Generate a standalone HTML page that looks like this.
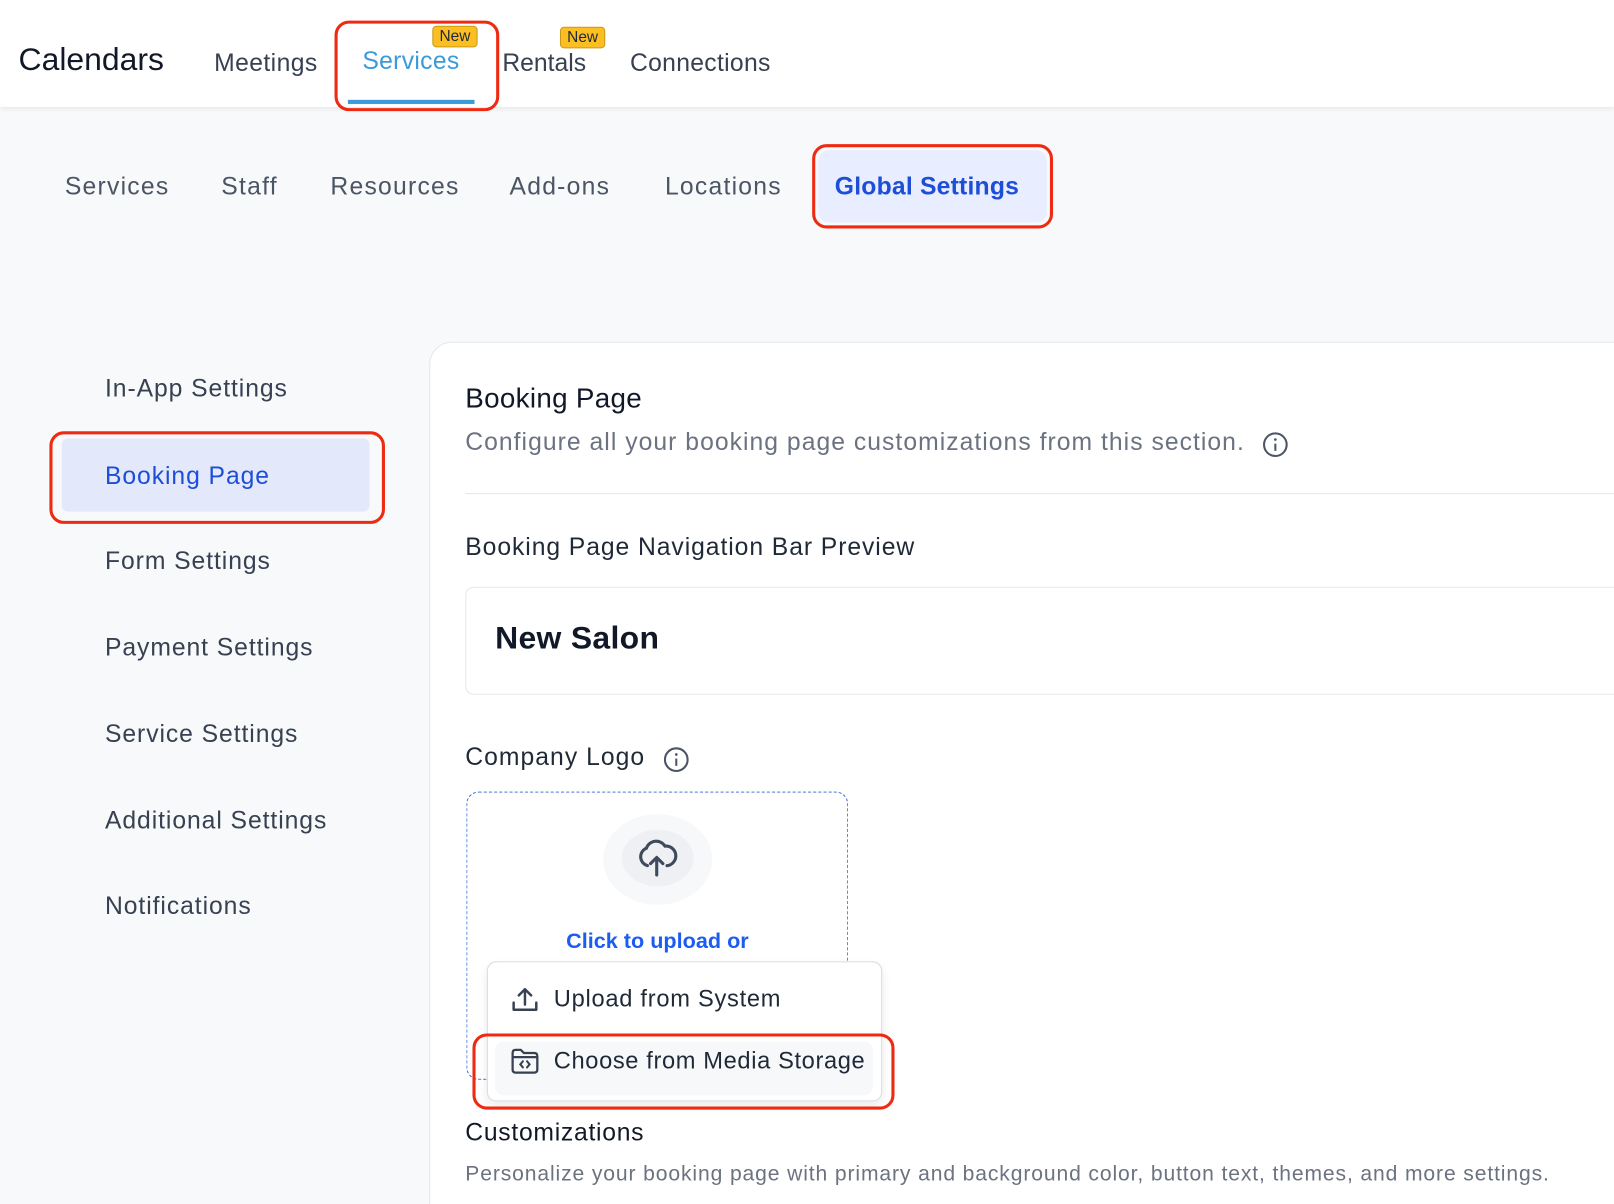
<!DOCTYPE html>
<html><head><meta charset="utf-8"><style>
html,body{margin:0;padding:0;width:1614px;height:1204px;overflow:hidden;background:#f8f9fb;}
#w{position:absolute;left:0;top:0;width:1568px;height:1170px;overflow:hidden;transform:scale(1.02934);transform-origin:0 0;font-family:"Liberation Sans",sans-serif;background:#f8f9fb;}
.a{position:absolute;white-space:nowrap;}
.top{position:absolute;left:0;top:0;width:1568px;height:104px;background:#fff;box-shadow:0 2px 5px rgba(0,0,0,.08);}
.badge{position:absolute;background:#fbbf24;border:1px solid #c99a10;border-radius:4px;font-size:15px;color:#1f2937;padding:1px 6px;line-height:17px;}
.red{position:absolute;border:3px solid #ef2a12;border-radius:14px;}
.sub{font-size:24px;color:#4b5563;top:168px;letter-spacing:1.2px;}
.side{font-size:24px;color:#374151;left:102px;letter-spacing:0.9px;}
.panel{position:absolute;left:417px;top:332px;width:1200px;height:845px;background:#fff;border:1px solid #e5e7eb;border-radius:22px 0 0 0;}
</style></head><body><div id="w">
<div class="top"></div>
<div class="a" style="left:18px;top:40px;font-size:31px;color:#111827;">Calendars</div>
<div class="a" style="left:208px;top:48px;font-size:24px;color:#374151;letter-spacing:0.4px;">Meetings</div>
<div class="a" style="left:352px;top:46px;font-size:24px;color:#3b9ad9;letter-spacing:0.3px;">Services</div>
<div class="a" style="left:338px;top:97px;width:123px;height:4px;background:#3b9ad9;"></div>
<div class="badge" style="left:420px;top:25px;">New</div>
<div class="red" style="left:325px;top:20px;width:154px;height:82px;"></div>
<div class="a" style="left:488px;top:48px;font-size:24px;color:#374151;">Rentals</div>
<div class="badge" style="left:544px;top:26px;">New</div>
<div class="a" style="left:612px;top:48px;font-size:24px;color:#374151;letter-spacing:0.3px;">Connections</div>

<div class="a sub" style="left:63px;">Services</div>
<div class="a sub" style="left:215px;">Staff</div>
<div class="a sub" style="left:321px;">Resources</div>
<div class="a sub" style="left:495px;">Add-ons</div>
<div class="a sub" style="left:646px;">Locations</div>
<div class="a" style="left:795px;top:146px;width:222px;height:70px;background:#e8edff;border-radius:10px;"></div>
<div class="a sub" style="left:811px;color:#1d4ed8;font-weight:bold;letter-spacing:0.2px;">Global Settings</div>
<div class="red" style="left:789px;top:140px;width:228px;height:76px;"></div>

<div class="a side" style="top:364px;">In-App Settings</div>
<div class="a" style="left:60px;top:426px;width:299px;height:71px;background:#e3e8fb;border-radius:6px;"></div>
<div class="a side" style="top:449px;color:#1d4ed8;">Booking Page</div>
<div class="red" style="left:48px;top:419px;width:320px;height:84px;"></div>
<div class="a side" style="top:532px;">Form Settings</div>
<div class="a side" style="top:616px;">Payment Settings</div>
<div class="a side" style="top:700px;">Service Settings</div>
<div class="a side" style="top:784px;">Additional Settings</div>
<div class="a side" style="top:867px;">Notifications</div>

<div class="panel"></div>
<div class="a" style="left:452px;top:372px;font-size:27px;color:#111827;letter-spacing:0.3px;">Booking Page</div>
<div class="a" style="left:452px;top:416px;font-size:24px;color:#6b7280;letter-spacing:1px;">Configure all your booking page customizations from this section.</div>
<svg class="a" style="left:1226px;top:419px" width="26" height="26" viewBox="0 0 26 26"><circle cx="13" cy="13" r="11" fill="none" stroke="#4b5563" stroke-width="2"/><line x1="13" y1="12" x2="13" y2="19" stroke="#4b5563" stroke-width="2"/><circle cx="13" cy="8" r="1.3" fill="#4b5563"/></svg>
<div class="a" style="left:452px;top:479px;width:1120px;height:1px;background:#e5e7eb;"></div>
<div class="a" style="left:452px;top:518px;font-size:24px;color:#1f2937;letter-spacing:0.9px;">Booking Page Navigation Bar Preview</div>
<div class="a" style="left:452px;top:570px;width:1130px;height:103px;border:1px solid #e5e7eb;border-radius:8px;background:#fff;"></div>
<div class="a" style="left:481px;top:602px;font-size:31px;font-weight:bold;color:#111827;letter-spacing:0.3px;">New Salon</div>
<div class="a" style="left:452px;top:722px;font-size:24px;color:#1f2937;letter-spacing:1px;">Company Logo</div>
<svg class="a" style="left:644px;top:725px" width="26" height="26" viewBox="0 0 26 26"><circle cx="13" cy="13" r="11" fill="none" stroke="#4b5563" stroke-width="2"/><line x1="13" y1="12" x2="13" y2="19" stroke="#4b5563" stroke-width="2"/><circle cx="13" cy="8" r="1.3" fill="#4b5563"/></svg>
<div class="a" style="left:453px;top:769px;width:369px;height:278px;border:1.5px dashed #3b6fe0;border-radius:12px;"></div>
<div class="a" style="left:586px;top:791px;width:106px;height:88px;border-radius:50%;background:#f7f8fa;"></div>
<div class="a" style="left:604px;top:806px;width:70px;height:55px;border-radius:50%;background:#eef0f3;"></div>
<svg class="a" style="left:617px;top:814px" width="42" height="40" viewBox="0 0 42 40"><path d="M12 27 A9 9 0 0 1 11 10 A10 10 0 0 1 29 8 A8 8 0 0 1 31 27" fill="none" stroke="#3f4a5c" stroke-width="3" stroke-linecap="round"/><path d="M21 36 V20 M15 25 L21 19 L27 25" fill="none" stroke="#3f4a5c" stroke-width="3" stroke-linecap="round" stroke-linejoin="round"/></svg>
<div class="a" style="left:550px;top:903px;font-size:21px;font-weight:bold;color:#1d5cf0;">Click to upload or</div>
<div class="a" style="left:473px;top:934px;width:382px;height:134px;background:#fff;border:1px solid #d9dce1;border-radius:9px;box-shadow:0 4px 10px rgba(0,0,0,.08);"></div>
<svg class="a" style="left:496px;top:957px" width="28" height="28" viewBox="0 0 28 28"><path d="M3 17 V24 H25 V17 M14 19 V4 M8 10 L14 4 L20 10" fill="none" stroke="#374151" stroke-width="2.4" stroke-linecap="round" stroke-linejoin="round"/></svg>
<div class="a" style="left:538px;top:957px;font-size:23px;color:#1f2937;letter-spacing:0.7px;">Upload from System</div>
<div class="a" style="left:481px;top:1012px;width:367px;height:52px;background:#f7f8fa;border-radius:8px;"></div>
<svg class="a" style="left:496px;top:1018px" width="28" height="26" viewBox="0 0 28 26"><path d="M2 5 Q2 2 5 2 H10 L13 5 H23 Q26 5 26 8 V21 Q26 24 23 24 H5 Q2 24 2 21 Z M2 9 H26" fill="none" stroke="#374151" stroke-width="2.2" stroke-linejoin="round"/><path d="M12 13 L9.5 16 L12 19 M16 13 L18.5 16 L16 19" fill="none" stroke="#374151" stroke-width="2" stroke-linecap="round"/></svg>
<div class="a" style="left:538px;top:1017px;font-size:23px;color:#1f2937;letter-spacing:0.6px;">Choose from Media Storage</div>
<div class="red" style="left:459px;top:1004px;width:404px;height:68px;"></div>
<div class="a" style="left:452px;top:1087px;font-size:24px;color:#111827;letter-spacing:0.7px;">Customizations</div>
<div class="a" style="left:452px;top:1129px;font-size:20.5px;color:#6b7280;letter-spacing:0.85px;">Personalize your booking page with primary and background color, button text, themes, and more settings.</div>
</div></body></html>
